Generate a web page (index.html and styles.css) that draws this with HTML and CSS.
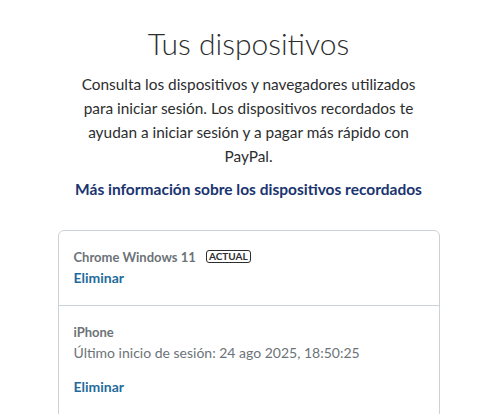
FILE: index.html
```html
<!DOCTYPE html>
<html lang="es">
<head>
    <meta charset="UTF-8">
    <meta name="viewport" content="width=device-width, initial-scale=1.0">
    <title>Tus dispositivos</title>
    <link rel="stylesheet" href="styles.css">
</head>
<body>
    <div class="devices-page">
        <h1>Tus dispositivos</h1>
        <p class="intro">Consulta los dispositivos y navegadores utilizados para iniciar sesión. Los dispositivos recordados te ayudan a iniciar sesión y a pagar más rápido con PayPal.</p>
        <a class="more-link" href="#">Más información sobre los dispositivos recordados</a>

        <div class="device-list">
            <div class="device">
                <div class="device-name">Chrome Windows 11 <span class="badge">ACTUAL</span></div>
                <a class="remove" href="#">Eliminar</a>
            </div>
            <div class="device">
                <div class="device-name">iPhone</div>
                <div class="last-login">Último inicio de sesión: 24 ago 2025, 18:50:25</div>
                <a class="remove spaced" href="#">Eliminar</a>
            </div>
        </div>
    </div>
</body>
</html>
```

FILE: styles.css
```css
body {
    margin: 0;
    padding: 0;
    font-family: Lato, "Open Sans", sans-serif;
    background: #fff;
    color: #2c2e2f;
}

.devices-page {
    padding: 25px 0 0 8px;
    display: flex;
    flex-direction: column;
    align-items: center;
    text-align: center;
}

.devices-page h1 {
    margin: 0;
    font-size: 30px;
    font-weight: 300;
    line-height: 36px;
    color: #2c2e2f;
}

.intro {
    margin: 11px 0 0;
    max-width: 350px;
    font-size: 15.4px;
    line-height: 24px;
    color: #2c2e2f;
}

.more-link {
    margin-top: 12px;
    font-size: 15.5px;
    font-weight: 700;
    color: #1a3470;
    text-decoration: none;
}

.device-list {
    margin-top: 32px;
    width: 380px;
    border: 1px solid #cbd2d6;
    border-radius: 6px;
    text-align: left;
}

.device {
    padding: 16px 15px 19px;
    border-bottom: 1px solid #cbd2d6;
}

.device:last-child {
    padding-bottom: 30px;
}

.device-name {
    font-size: 13px;
    font-weight: 700;
    color: #6c7378;
    line-height: 20px;
}

.badge {
    display: inline-block;
    margin-left: 7px;
    padding: 0 2px;
    border: 1px solid #2c2e2f;
    border-radius: 3px;
    font-size: 10px;
    line-height: 11px;
    color: #2c2e2f;
    vertical-align: 2px;
}

.last-login {
    font-size: 14px;
    line-height: 22px;
    color: #6c7378;
}

.remove {
    display: inline-block;
    margin-top: 1px;
    font-size: 14px;
    font-weight: 700;
    color: #1f6c9c;
    text-decoration: none;
}

.remove.spaced {
    margin-top: 14px;
}
```
